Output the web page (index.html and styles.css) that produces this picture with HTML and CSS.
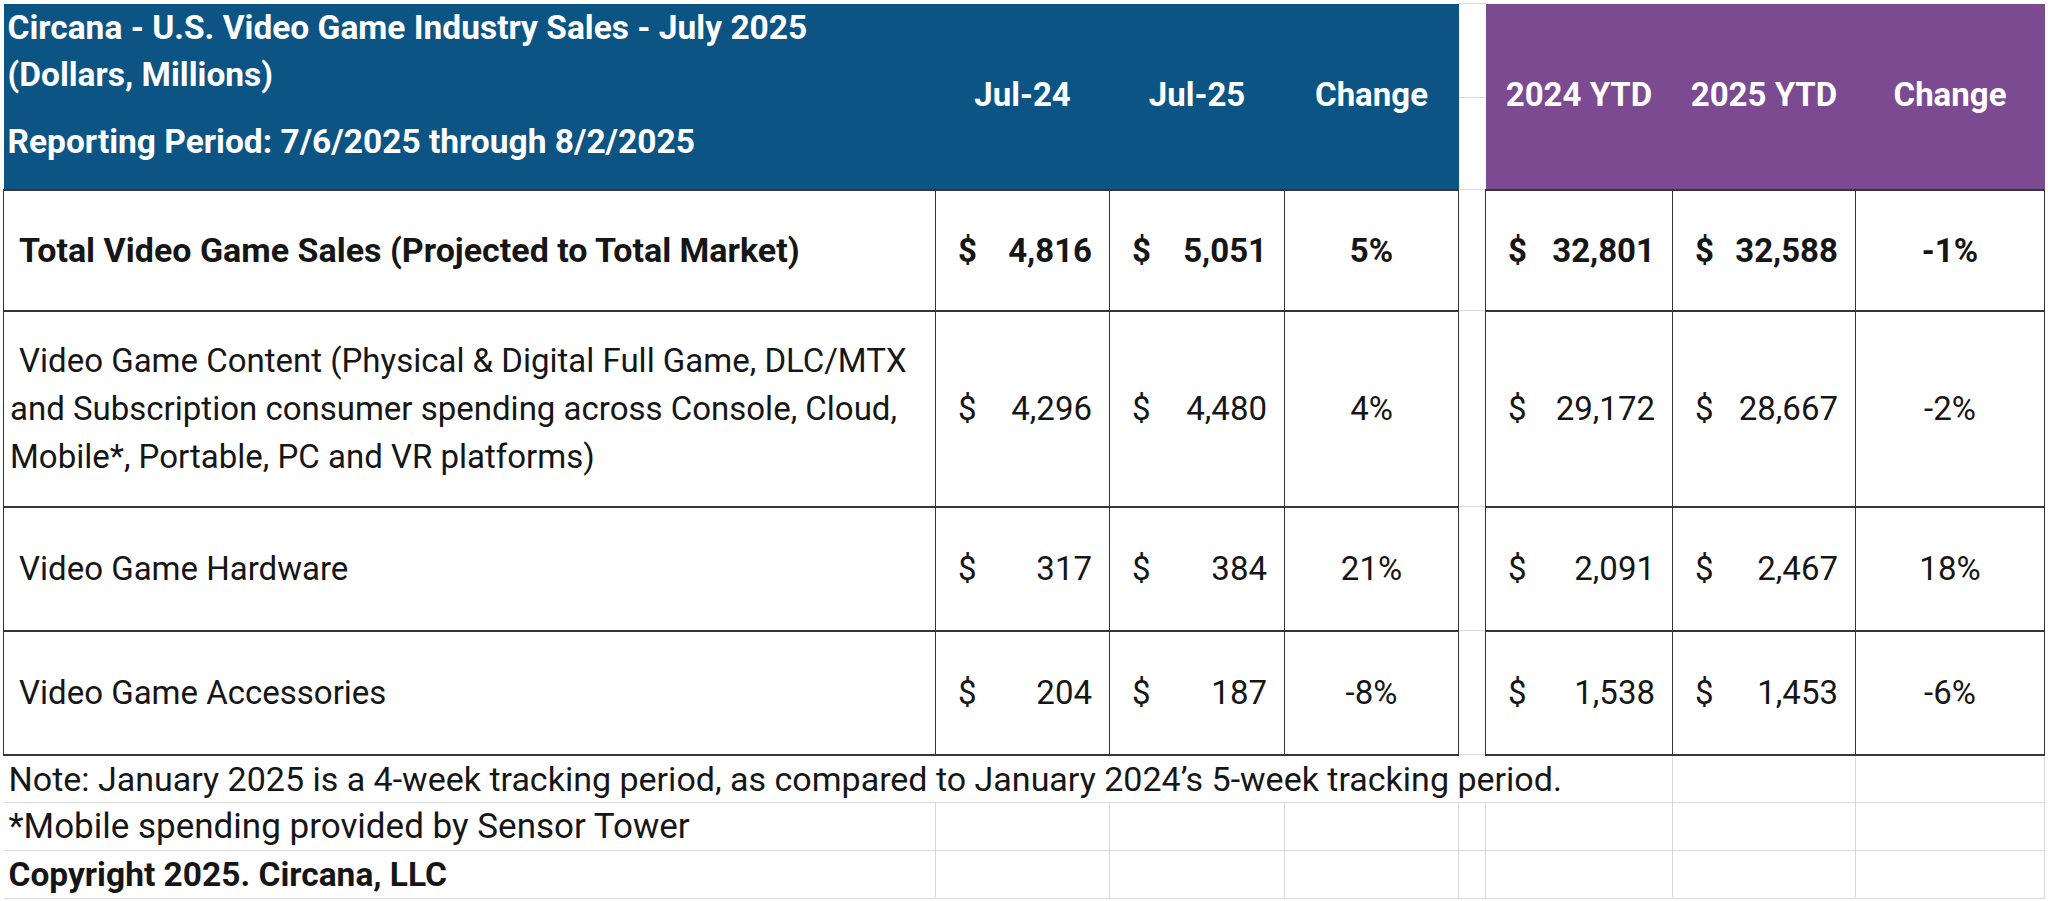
FILE: index.html
```html
<!DOCTYPE html>
<html lang="en">
<head>
<meta charset="utf-8">
<title>Circana - U.S. Video Game Industry Sales - July 2025</title>
<link rel="stylesheet" href="styles.css">
</head>
<body>
<table class="sheet">
  <colgroup>
    <col class="c-label">
    <col class="c-m1">
    <col class="c-m2">
    <col class="c-chg">
    <col class="c-gap">
    <col class="c-y1">
    <col class="c-y2">
    <col class="c-chg2">
  </colgroup>
  <thead>
    <tr class="h1">
      <th class="blue title">Circana - U.S. Video Game Industry Sales - July 2025<br>(Dollars, Millions)</th>
      <th class="blue colh" rowspan="2">Jul-24</th>
      <th class="blue colh" rowspan="2">Jul-25</th>
      <th class="blue colh" rowspan="2">Change</th>
      <td class="gap"></td>
      <th class="purple colh" rowspan="2">2024 YTD</th>
      <th class="purple colh" rowspan="2">2025 YTD</th>
      <th class="purple colh" rowspan="2">Change</th>
    </tr>
    <tr class="h2">
      <th class="blue period">Reporting Period: 7/6/2025 through 8/2/2025</th>
      <td class="gap"></td>
    </tr>
  </thead>
  <tbody>
    <tr class="r-total bold">
      <td class="label">Total Video Game Sales (Projected to Total Market)</td>
      <td class="money"><span class="cur">$</span><span class="amt">4,816</span></td>
      <td class="money"><span class="cur">$</span><span class="amt">5,051</span></td>
      <td class="pct">5%</td>
      <td class="gap"></td>
      <td class="money"><span class="cur">$</span><span class="amt">32,801</span></td>
      <td class="money"><span class="cur">$</span><span class="amt">32,588</span></td>
      <td class="pct">-1%</td>
    </tr>
    <tr class="r-content">
      <td class="label">Video Game Content (Physical &amp; Digital Full Game, DLC/MTX and Subscription consumer spending across Console, Cloud, Mobile*, Portable, PC and VR platforms)</td>
      <td class="money"><span class="cur">$</span><span class="amt">4,296</span></td>
      <td class="money"><span class="cur">$</span><span class="amt">4,480</span></td>
      <td class="pct">4%</td>
      <td class="gap"></td>
      <td class="money"><span class="cur">$</span><span class="amt">29,172</span></td>
      <td class="money"><span class="cur">$</span><span class="amt">28,667</span></td>
      <td class="pct">-2%</td>
    </tr>
    <tr class="r-std">
      <td class="label">Video Game Hardware</td>
      <td class="money"><span class="cur">$</span><span class="amt">317</span></td>
      <td class="money"><span class="cur">$</span><span class="amt">384</span></td>
      <td class="pct">21%</td>
      <td class="gap"></td>
      <td class="money"><span class="cur">$</span><span class="amt">2,091</span></td>
      <td class="money"><span class="cur">$</span><span class="amt">2,467</span></td>
      <td class="pct">18%</td>
    </tr>
    <tr class="r-std">
      <td class="label">Video Game Accessories</td>
      <td class="money"><span class="cur">$</span><span class="amt">204</span></td>
      <td class="money"><span class="cur">$</span><span class="amt">187</span></td>
      <td class="pct">-8%</td>
      <td class="gap"></td>
      <td class="money"><span class="cur">$</span><span class="amt">1,538</span></td>
      <td class="money"><span class="cur">$</span><span class="amt">1,453</span></td>
      <td class="pct">-6%</td>
    </tr>
  </tbody>
  <tfoot>
    <tr class="f-row">
      <td class="note" colspan="6">Note: January 2025 is a 4-week tracking period, as compared to January 2024’s 5-week tracking period.</td>
      <td class="grid"></td>
      <td class="grid"></td>
    </tr>
    <tr class="f-row">
      <td class="note mobile">*Mobile spending provided by Sensor Tower</td>
      <td class="grid"></td>
      <td class="grid"></td>
      <td class="grid"></td>
      <td class="grid"></td>
      <td class="grid"></td>
      <td class="grid"></td>
      <td class="grid"></td>
    </tr>
    <tr class="f-row">
      <td class="note copy">Copyright 2025. Circana, LLC</td>
      <td class="grid"></td>
      <td class="grid"></td>
      <td class="grid"></td>
      <td class="grid"></td>
      <td class="grid"></td>
      <td class="grid"></td>
      <td class="grid"></td>
    </tr>
  </tfoot>
</table>
</body>
</html>
```

FILE: styles.css
```css
* {
  box-sizing: border-box;
}

html,
body {
  margin: 0;
  background: #ffffff;
}

body {
  padding: 3px 0 0 3px;
  font-family: Roboto, "Noto Sans", "Liberation Sans", sans-serif;
  color: #161616;
  overflow: hidden;
}

.sheet {
  border-collapse: collapse;
  table-layout: fixed;
  width: 2041px;
}

.c-label { width: 932px; }
.c-m1 { width: 174px; }
.c-m2 { width: 175px; }
.c-chg { width: 174px; }
.c-gap { width: 27px; }
.c-y1 { width: 187px; }
.c-y2 { width: 183px; }
.c-chg2 { width: 189px; }

th,
td {
  padding: 0;
  font-weight: 400;
}

/* header */
.h1 { height: 93px; }
.h2 { height: 92px; }

.blue {
  background: #0c5483;
  color: #ffffff;
  font-weight: 700;
}

.purple {
  background: #7b4a91;
  color: #ffffff;
  font-weight: 700;
}

.title {
  text-align: left;
  vertical-align: top;
  font-size: 33.5px;
  line-height: 47px;
  padding-left: 4px;
}

.period {
  text-align: left;
  vertical-align: middle;
  font-size: 33.5px;
  line-height: 47px;
  padding: 0 0 4px 4px;
}

.colh {
  text-align: center;
  vertical-align: middle;
  font-size: 33px;
  line-height: 40px;
  padding-bottom: 2px;
}

.gap {
  background: #ffffff;
  border-top: 1px solid #d9d9d9;
  border-bottom: 1px solid #d9d9d9;
}

/* body */
tbody td {
  border: 1px solid #363636;
  border-bottom-width: 2px;
  border-top-width: 2px;
  font-size: 33px;
  vertical-align: middle;
}

tbody td.gap {
  border-top: 1px solid #d9d9d9;
  border-bottom: 1px solid #d9d9d9;
}

.r-total { height: 121px; }
.r-content { height: 196px; }
.r-std { height: 124px; }

.bold td {
  font-weight: 700;
}

.bold td.label {
  font-size: 34px;
}

.label {
  text-align: left;
  padding: 0 6px 0 6px;
  text-indent: 9px;
  line-height: 48px;
}

.money {
  padding: 0 17px 0 22px;
}

.money .cur {
  float: left;
}

.money .amt {
  float: right;
}

.money::after {
  content: "";
  display: block;
  clear: both;
}

.pct {
  text-align: center;
}

/* footer */
.f-row {
  height: 48px;
}

.f-row td {
  font-size: 34px;
  vertical-align: middle;
  border-bottom: 1px solid #d9d9d9;
  border-right: 1px solid #d9d9d9;
  white-space: nowrap;
  padding: 0 0 0 5px;
}

.f-row td.grid {
  padding: 0;
}

.f-row td.mobile {
  font-size: 35px;
}

.f-row td.copy {
  font-weight: 700;
  font-size: 33.5px;
}
```
